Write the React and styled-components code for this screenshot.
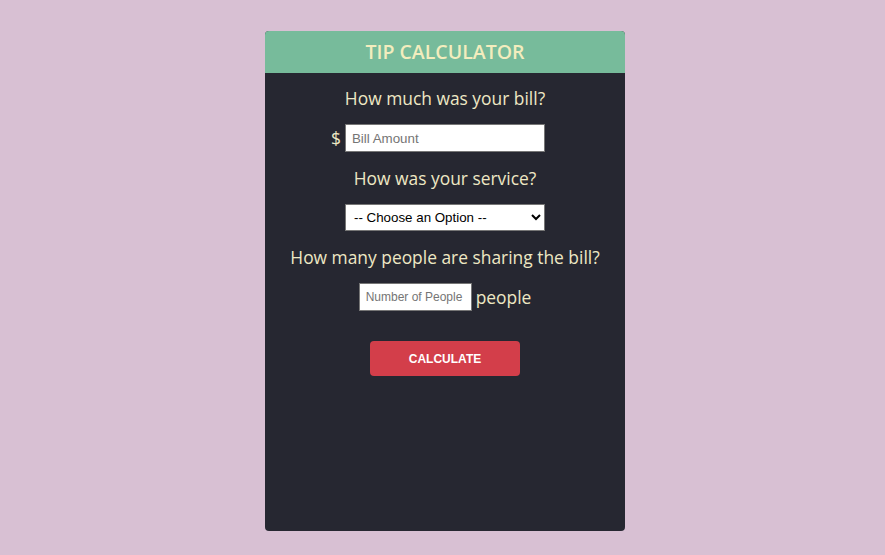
import React from 'react';
import styled, { createGlobalStyle } from 'styled-components';

const GlobalStyle = createGlobalStyle`
    body {
        margin: 0;
        background-color: #d8c0d3;
        font-family: 'Open Sans', sans-serif;
    }
`;

const Page = styled.div`
    display: flex;
    justify-content: center;
    padding: 31px 0 0 5px;
    height: 555px;
    box-sizing: border-box;
`;

const Card = styled.div`
    width: 360px;
    height: 500px;
    background-color: #262731;
    border-radius: 4px;
    overflow: hidden;
    display: flex;
    flex-direction: column;
`;

const Header = styled.h1`
    margin: 0;
    height: 42px;
    line-height: 42px;
    background-color: #77bb9b;
    color: #f3edbe;
    text-align: center;
    font-size: 19.5px;
    font-weight: 600;
`;

const Body = styled.div`
    display: flex;
    flex-direction: column;
    align-items: center;
    gap: 15px;
    padding-top: 14px;
`;

const Question = styled.p`
    margin: 0;
    color: #eee8c4;
    font-size: 17.4px;
    line-height: 22px;
`;

const Row = styled.div`
    display: flex;
    align-items: center;
    gap: ${props => props.gap || 4}px;
    color: #eee8c4;
    font-size: 17.4px;
`;

const Input = styled.input`
    width: ${props => props.width}px;
    height: 28px;
    box-sizing: border-box;
    border: 1px solid #767676;
    padding: 1px ${props => props.pad || 6}px;
    font-family: Arial, 'Liberation Sans', sans-serif;
    font-size: ${props => props.size || 13.33}px;
    &::placeholder {
        color: #757575;
    }
`;

const Select = styled.select`
    width: 200px;
    height: 27px;
    box-sizing: border-box;
    border: 1px solid #767676;
    border-radius: 0;
    background: #fff;
    font-family: Arial, 'Liberation Sans', sans-serif;
    font-size: 13.33px;
    color: #000;
    padding: 0 4px;
`;

const Button = styled.button`
    margin-top: 15px;
    width: 150px;
    height: 35px;
    border: none;
    border-radius: 4px;
    background-color: #d33e4a;
    color: #fff;
    font-family: Arial, 'Liberation Sans', sans-serif;
    font-weight: 700;
    font-size: 12px;
    text-transform: uppercase;
`;

export default function App() {
    return (
        <Page>
            <GlobalStyle />
            <Card>
                <Header>TIP CALCULATOR</Header>
                <Body>
                    <Question>How much was your bill?</Question>
                    <Row gap={4} style={{ marginLeft: '-14px' }}>
                        <span>$</span>
                        <Input width={200} placeholder='Bill Amount' />
                    </Row>
                    <Question>How was your service?</Question>
                    <Select defaultValue=''>
                        <option value='' disabled>-- Choose an Option --</option>
                        <option value='0.3'>30% - Outstanding</option>
                        <option value='0.2'>20% - Good</option>
                        <option value='0.15'>15% - It was OK</option>
                        <option value='0.1'>10% - Bad</option>
                        <option value='0.05'>5% - Terrible</option>
                    </Select>
                    <Question>How many people are sharing the bill?</Question>
                    <Row gap={4} style={{ marginLeft: '0px' }}>
                        <Input width={113} size={12} pad={6} placeholder='Number of People' />
                        <span>people</span>
                    </Row>
                    <Button>Calculate</Button>
                </Body>
            </Card>
        </Page>
    );
}
